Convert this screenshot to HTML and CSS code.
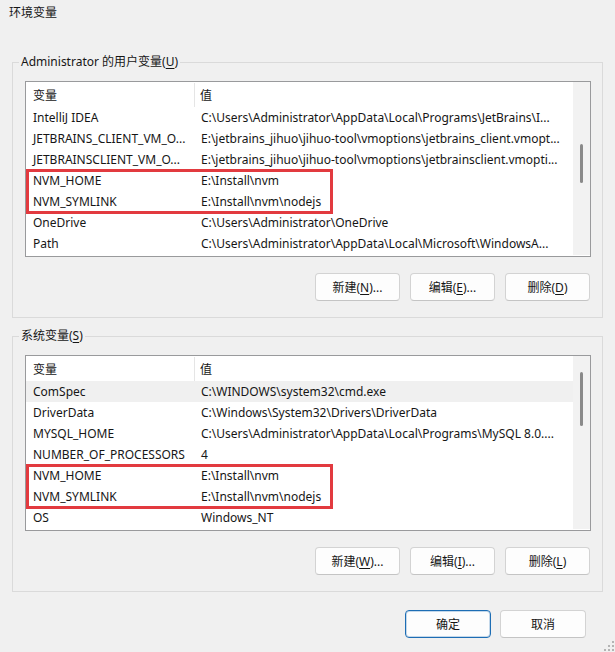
FILE: index.html
```html
<!DOCTYPE html>
<html lang="zh-CN">
<head>
<meta charset="utf-8">
<title>环境变量</title>
<link rel="stylesheet" href="styles.css">
</head>
<body>
<div class="dialog">
  <div class="titlebar">环境变量</div>

  <fieldset class="group">
    <legend>Administrator 的用户变量(<u>U</u>)</legend>
    <div class="list">
      <div class="list-body">
        <div class="list-head"><span class="col-name">变量</span><span class="col-value">值</span></div>
        <div class="row"><span class="col-name">IntelliJ IDEA</span><span class="col-value">C:\Users\Administrator\AppData\Local\Programs\JetBrains\I...</span></div>
        <div class="row"><span class="col-name">JETBRAINS_CLIENT_VM_O...</span><span class="col-value">E:\jetbrains_jihuo\jihuo-tool\vmoptions\jetbrains_client.vmopt...</span></div>
        <div class="row"><span class="col-name">JETBRAINSCLIENT_VM_O...</span><span class="col-value">E:\jetbrains_jihuo\jihuo-tool\vmoptions\jetbrainsclient.vmopti...</span></div>
        <div class="mark mark-user">
          <div class="row"><span class="col-name">NVM_HOME</span><span class="col-value">E:\Install\nvm</span></div>
          <div class="row"><span class="col-name">NVM_SYMLINK</span><span class="col-value">E:\Install\nvm\nodejs</span></div>
        </div>
        <div class="row"><span class="col-name">OneDrive</span><span class="col-value">C:\Users\Administrator\OneDrive</span></div>
        <div class="row"><span class="col-name">Path</span><span class="col-value">C:\Users\Administrator\AppData\Local\Microsoft\WindowsA...</span></div>
      </div>
      <div class="scrollbar"><div class="thumb thumb-user"></div></div>
    </div>
    <div class="actions">
      <button class="btn">新建(<u>N</u>)...</button>
      <button class="btn">编辑(<u>E</u>)...</button>
      <button class="btn">删除(<u>D</u>)</button>
    </div>
  </fieldset>

  <fieldset class="group group-system">
    <legend>系统变量(<u>S</u>)</legend>
    <div class="list list-system">
      <div class="list-body">
        <div class="list-head"><span class="col-name">变量</span><span class="col-value">值</span></div>
        <div class="row row-selected"><span class="col-name">ComSpec</span><span class="col-value">C:\WINDOWS\system32\cmd.exe</span></div>
        <div class="row"><span class="col-name">DriverData</span><span class="col-value">C:\Windows\System32\Drivers\DriverData</span></div>
        <div class="row"><span class="col-name">MYSQL_HOME</span><span class="col-value">C:\Users\Administrator\AppData\Local\Programs\MySQL 8.0....</span></div>
        <div class="row"><span class="col-name">NUMBER_OF_PROCESSORS</span><span class="col-value">4</span></div>
        <div class="mark mark-system">
          <div class="row"><span class="col-name">NVM_HOME</span><span class="col-value">E:\Install\nvm</span></div>
          <div class="row"><span class="col-name">NVM_SYMLINK</span><span class="col-value">E:\Install\nvm\nodejs</span></div>
        </div>
        <div class="row"><span class="col-name">OS</span><span class="col-value">Windows_NT</span></div>
      </div>
      <div class="scrollbar"><div class="thumb thumb-system"></div></div>
    </div>
    <div class="actions">
      <button class="btn">新建(<u>W</u>)...</button>
      <button class="btn">编辑(<u>I</u>)...</button>
      <button class="btn">删除(<u>L</u>)</button>
    </div>
  </fieldset>

  <div class="footer">
    <button class="btn btn-wide btn-default">确定</button>
    <button class="btn btn-wide">取消</button>
  </div>

  <svg class="grip" width="10" height="10" viewBox="0 0 10 10" aria-hidden="true">
    <g fill="#b4b4b4">
      <rect x="8" y="0" width="2" height="2"/>
      <rect x="4" y="4" width="2" height="2"/>
      <rect x="8" y="4" width="2" height="2"/>
      <rect x="0" y="8" width="2" height="2"/>
      <rect x="4" y="8" width="2" height="2"/>
      <rect x="8" y="8" width="2" height="2"/>
    </g>
  </svg>
</div>
</body>
</html>
```

FILE: styles.css
```css
*,
*::before,
*::after {
  box-sizing: border-box;
}

html, body {
  margin: 0;
  padding: 0;
}

body {
  background: #f0f0f0;
  font-family: "Noto Sans", "Noto Sans CJK SC", sans-serif;
  font-size: 12px;
  color: #161616;
}

.dialog {
  position: relative;
  width: 615px;
  height: 652px;
  overflow: hidden;
}

.titlebar {
  height: 24px;
  line-height: 24px;
  padding-left: 9px;
  font-family: "Noto Sans CJK SC", sans-serif;
}

/* group boxes */
.group {
  margin: 30px 0 0 12px;
  width: 591px;
  border: 1px solid #dadada;
  padding: 11px 11px 16px 12px;
  min-width: 0;
}

.group-system {
  margin-top: 10px;
}

.group legend {
  padding: 0 2px;
  margin-left: -6px;
  line-height: 16px;
}

u {
  text-decoration-thickness: 1px;
  text-underline-offset: 2px;
}

/* list views */
.list {
  display: grid;
  grid-template-columns: 1fr 17px;
  height: 176px;
  border: 1px solid #999a9c;
  background: #fff;
  padding-bottom: 1px;
}

.list-body {
  overflow: hidden;
  padding-top: 1px;
}

.list-head,
.row {
  display: flex;
  white-space: nowrap;
}

.list-head {
  height: 24px;
  line-height: 24px;
  font-family: "Noto Sans CJK SC", sans-serif;
}

.row {
  height: 21px;
  line-height: 21px;
}

.col-name {
  flex: 0 0 169px;
  padding-left: 7px;
  overflow: hidden;
}

.col-value {
  flex: 1 1 auto;
  padding-left: 6px;
  overflow: hidden;
}

.list-head .col-name {
  border-right: 1px solid #e5e5e5;
}

.list-head .col-value {
  padding-left: 5px;
}

.row-selected {
  background: #f0f0f0;
}

/* red annotation frame around the nvm entries */
.mark {
  position: relative;
}

.mark::after {
  content: "";
  position: absolute;
  left: 0;
  top: -1px;
  bottom: -2px;
  width: 307px;
  border: 3px solid #e23a3f;
  pointer-events: none;
}

/* scrollbar */
.scrollbar {
  background: #f2f2f2;
  display: flex;
  flex-direction: column;
  align-items: center;
}

.thumb {
  width: 3px;
  border-radius: 2px;
  background: #8a8a8a;
}

.thumb-user {
  margin-top: 62px;
  height: 39px;
}

.thumb-system {
  margin-top: 16px;
  height: 54px;
}

/* buttons */
.actions {
  display: flex;
  justify-content: flex-end;
  gap: 10px;
  margin-top: 16px;
  padding-right: 1px;
}

.btn {
  width: 85px;
  height: 28px;
  border: 1px solid #d3d3d3;
  border-bottom-color: #c4c4c4;
  border-radius: 4px;
  background: #fdfdfd;
  font-family: "Noto Sans", "Noto Sans CJK SC", sans-serif;
  font-size: 12px;
  color: #161616;
  padding: 0;
}

.btn-wide {
  width: 86px;
}

.btn-default {
  border: 1px solid #1d6db4;
  box-shadow: inset 0 0 0 1px rgba(29, 109, 180, 0.25);
}

.footer {
  display: flex;
  justify-content: flex-end;
  gap: 9px;
  margin-top: 18px;
  padding-right: 29px;
}

.grip {
  position: absolute;
  right: 1px;
  bottom: 1px;
}
```
